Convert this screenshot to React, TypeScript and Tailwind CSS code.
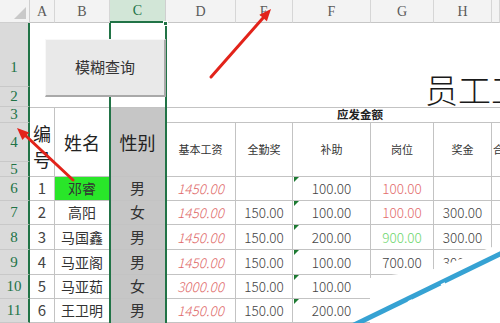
import React from 'react';

type Row = {
  no: string;
  name: string;
  sex: string;
  base: string;
  full: string;
  sub: string;
  post: string;
  postTone?: 'red' | 'green';
  bonus: string;
};

const rows: Row[] = [
  { no: '1', name: '邓睿', sex: '男', base: '1450.00', full: '', sub: '100.00', post: '100.00', postTone: 'red', bonus: '' },
  { no: '2', name: '高阳', sex: '女', base: '1450.00', full: '150.00', sub: '100.00', post: '100.00', postTone: 'red', bonus: '300.00' },
  { no: '3', name: '马国鑫', sex: '男', base: '1450.00', full: '150.00', sub: '200.00', post: '900.00', postTone: 'green', bonus: '300.00' },
  { no: '4', name: '马亚阁', sex: '男', base: '1450.00', full: '150.00', sub: '100.00', post: '700.00', bonus: '300.00' },
  { no: '5', name: '马亚茹', sex: '女', base: '3000.00', full: '150.00', sub: '100.00', post: '', bonus: '' },
  { no: '6', name: '王卫明', sex: '男', base: '1450.00', full: '150.00', sub: '200.00', post: '', bonus: '' },
];

// the I column is only a sliver at the right edge, its letter is not visible
const letters = ['A', 'B', 'C', 'D', 'E', 'F', 'G', 'H', ''];
const subHeads = ['基本工资', '全勤奖', '补助', '岗位', '奖金'];

const rowHead =
  "flex items-center justify-center bg-[#dadada] border-b border-[#c8c8c8] border-r-2 border-r-[#217346] text-[#217346] text-[15px] font-['Liberation_Serif',serif]";
const cell = 'flex items-center justify-center border-r border-b border-[#c3c3c3]';
const num = "text-[13.5px] font-light font-['Noto_Sans_CJK_SC_Light','Noto_Sans_CJK_SC',sans-serif]";

const toneClass = (t?: 'red' | 'green') =>
  t === 'red' ? 'text-[#e36d6d]' : t === 'green' ? 'text-[#6ed66e]' : 'text-[#444]';

const RowHeader = ({ n, className = '' }: { n: string; className?: string }) => (
  <div className={`${rowHead} ${className}`}>{n}</div>
);

export default function App() {
  return (
    <div className="relative w-[500px] h-[323px] overflow-hidden bg-white font-['Noto_Sans_CJK_SC',sans-serif]">
      <div className="grid grid-cols-[30px_25px_55px_56px_70px_57px_78px_63px_58px_8px] grid-rows-[23px_64px_20px_16px_39px_15px_24px_24px_25px_25px_24px_24px]">
        {/* column letters */}
        <div className="relative bg-[#f3f3f3] border-r border-b border-[#cfcfcf]">
          <svg className="absolute right-[3px] bottom-[3px]" width="12" height="12">
            <polygon points="12,0 12,12 0,12" fill="#c9c9c9" />
          </svg>
        </div>
        {letters.map((l, i) =>
          l === 'C' ? (
            <div
              key={i}
              className="flex items-center justify-center bg-[#d2e6d7] border-r border-[#cfcfcf] border-b-2 border-b-[#217346] text-[#217346] text-[14px] font-['Liberation_Serif',serif]"
            >
              {l}
            </div>
          ) : (
            <div
              key={i}
              className="flex items-center justify-center bg-[#f3f3f3] border-r border-b border-[#d6d6d6] border-b-[#c6c6c6] text-[#5a5a5a] text-[14px] font-['Liberation_Serif',serif]"
            >
              {l}
            </div>
          )
        )}

        {/* rows 1-2 */}
        <RowHeader n="1" className="items-start pt-[33px]" />
        <div className="col-span-2 row-span-2 bg-white" />
        <div className="row-span-2 bg-white" />
        <div className="col-span-6 row-span-2 flex items-end pl-[259px] pb-[1px] overflow-hidden">
          <span className="whitespace-nowrap text-[33px] leading-none font-light text-[#1a1a1a] font-['Noto_Sans_CJK_SC_Light','Noto_Sans_CJK_SC',sans-serif]">
            员工工资
          </span>
        </div>
        <RowHeader n="2" />

        {/* rows 3-5: table header */}
        <RowHeader n="3" />
        <div className={`${cell} row-span-3 border-t flex-col text-[18px] leading-[26px] text-[#222] pt-[8px]`}>
          <span>编</span>
          <span>号</span>
        </div>
        <div className={`${cell} row-span-3 border-t text-[18px] text-[#222]`}>姓名</div>
        <div className={`${cell} row-span-3 border-t bg-[#c6c6c6] text-[18px] text-[#222]`}>性别</div>
        <div className="col-span-6 flex items-center border-t border-b border-[#c3c3c3] pl-[171px] text-[11.5px] font-bold text-[#222]">
          应发金额
        </div>
        <RowHeader n="4" />
        {subHeads.map((h) => (
          <div key={h} className={`${cell} row-span-2 text-[11px] text-[#333]`}>
            {h}
          </div>
        ))}
        <div className="row-span-2 flex items-center border-b border-[#c3c3c3] pl-[1px] text-[11px] text-[#333] overflow-hidden whitespace-nowrap">
          合
        </div>
        <RowHeader n="5" />

        {/* data rows */}
        {rows.map((r, i) => (
          <React.Fragment key={r.no}>
            <RowHeader n={String(i + 6)} />
            <div className={`${cell} text-[15px] text-[#444]`}>{r.no}</div>
            <div className={`${cell} text-[14px] text-[#333] ${i === 0 ? 'bg-[#29e629]' : ''}`}>{r.name}</div>
            <div className={`${cell} bg-[#c6c6c6] text-[15px] text-[#333]`}>{r.sex}</div>
            <div className={`${cell} ${num} italic text-[#e06a6a]`}>{r.base}</div>
            <div className={`${cell} ${num} text-[#444]`}>{r.full}</div>
            <div className={`${cell} ${num} text-[#444] relative`}>
              <svg className="absolute left-[1px] top-0" width="5" height="5">
                <polygon points="0,0 5,0 0,5" fill="#1d7a32" />
              </svg>
              {r.sub}
            </div>
            <div className={`${cell} ${num} ${toneClass(r.postTone)}`}>{r.post}</div>
            <div className={`${cell} ${num} text-[#444]`}>{r.bonus}</div>
            <div className="border-b border-[#c3c3c3]" />
          </React.Fragment>
        ))}
      </div>

      {/* selected column C */}
      <div className="absolute left-[109px] top-[23px] bottom-0 w-[58px] border-x-2 border-[#217346]" />
      <div className="absolute left-[163px] top-[21px] w-[5px] h-[5px] bg-[#217346] border border-white" />

      {/* form button */}
      <div className="absolute left-[45px] top-[39px] w-[121px] h-[58px] flex items-center justify-center bg-[#e9e9e9] border-t border-l border-[#f8f8f8] border-r-2 border-b-2 border-r-[#a9a9a9] border-b-[#a9a9a9] text-[15px] text-[#333]">
        模糊查询
      </div>

      {/* annotations */}
      <svg className="absolute inset-0 pointer-events-none" width="500" height="323">
        <polygon points="370,278 434,269 500,244 500,323 370,323" fill="#ffffff" />
        <line x1="352" y1="326" x2="504" y2="252" stroke="#36a2d3" strokeWidth="5" />
        <line x1="441" y1="285" x2="445" y2="283" stroke="#ffffff" strokeWidth="1.5" />
        <line x1="408" y1="302" x2="412" y2="300" stroke="#ffffff" strokeWidth="1.5" />

        <line x1="211" y1="77" x2="263" y2="18" stroke="#e2231a" strokeWidth="3" strokeLinecap="round" />
        <polygon points="271,9 266.9,21.3 259.4,14.7" fill="#e2231a" />

        <line x1="73" y1="180" x2="26" y2="136" stroke="#e2231a" strokeWidth="3" strokeLinecap="round" />
        <polygon points="17,128 29.2,132.5 22.4,139.9" fill="#e2231a" />
      </svg>
    </div>
  );
}
